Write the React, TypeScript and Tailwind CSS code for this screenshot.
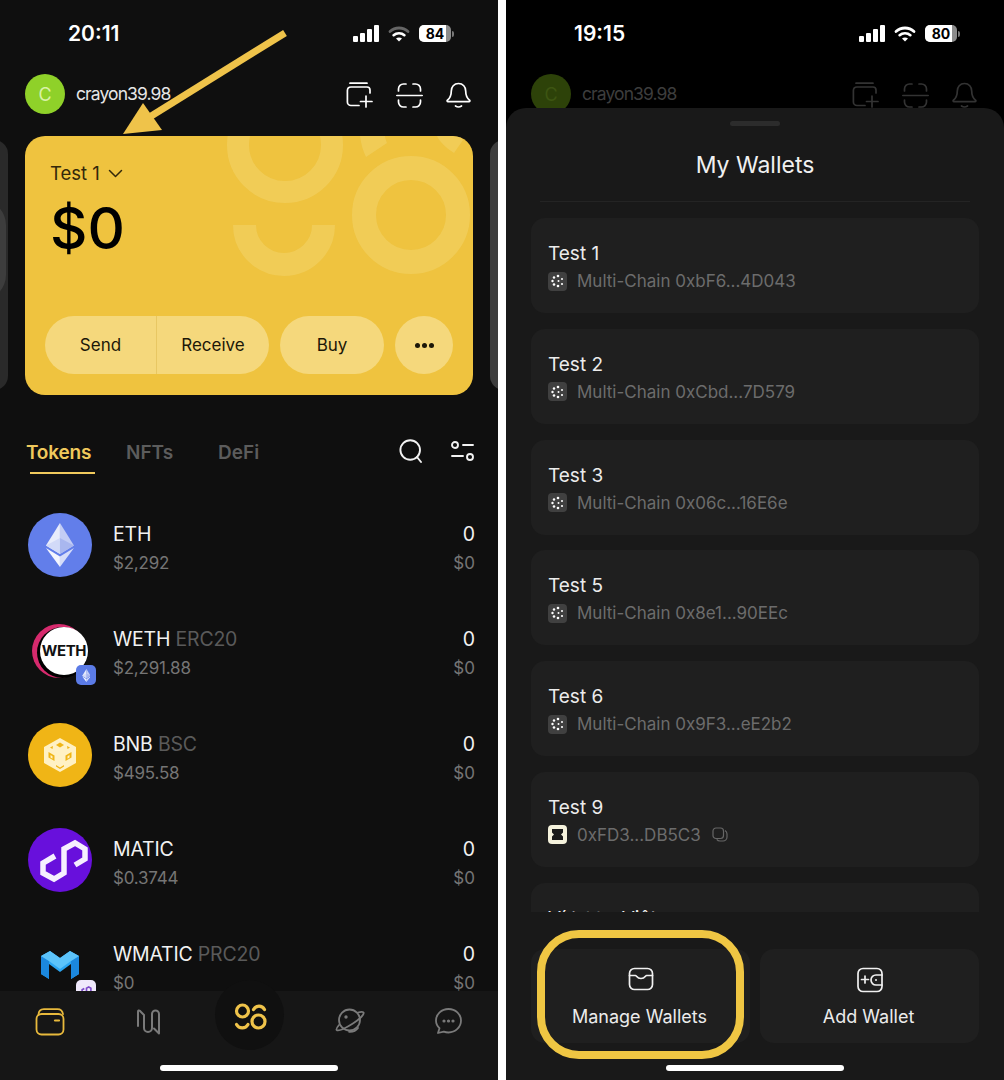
import React from "react";

const Y = "#efc34a";

function Signal() {
  return (
    <svg width="26" height="17" viewBox="0 0 26 17" fill="#fff">
      <rect x="0" y="11" width="5" height="6" rx="1" />
      <rect x="7" y="8" width="5" height="9" rx="1" />
      <rect x="14" y="4" width="5" height="13" rx="1" />
      <rect x="21" y="0" width="5" height="17" rx="1" />
    </svg>
  );
}
function Wifi({ dim }: { dim?: boolean }) {
  return (
    <svg width="22" height="16" viewBox="0 0 22 16" fill="none" strokeLinecap="round">
      <path d="M2 5.500C7 .8 15 .8 20 5.500" stroke={dim ? "#666" : "#fff"} strokeWidth="2.800" />
      <path d="M5.600 9.200c3-2.700 7.800-2.700 10.800 0" stroke="#fff" strokeWidth="2.600" />
      <path d="M11 15.600l-3-3.200c1.700-1.300 4.300-1.300 6 0z" fill="#fff" />
    </svg>
  );
}
function Battery({ value }: { value: string }) {
  return (
    <div className="flex items-center">
      <div className="w-[32px] h-[17px] rounded-[5px] bg-[#8c8c8c] overflow-hidden relative">
        <div className="absolute left-0 top-0 bottom-0 w-[27px] bg-white" />
        <div className="relative text-center text-black text-[14px] leading-[17px] font-bold">{value}</div>
      </div>
      <div className="w-[2px] h-[6px] bg-[#777] rounded-r-sm ml-[1px]" />
    </div>
  );
}
function StatusBar({ time, battery, dim }: { time: string; battery: string; dim?: boolean }) {
  return (
    <div className="h-[74px] flex items-start justify-between pt-[22px] pl-[68px] pr-[44px] shrink-0">
      <span className="text-white text-[21px] leading-[24px] font-semibold">{time}</span>
      <div className="flex items-center gap-[9px] pt-[3px]">
        <Signal />
        <Wifi dim={dim} />
        <Battery value={battery} />
      </div>
    </div>
  );
}
function HeaderIcons() {
  return (
    <div className="flex items-center gap-[23px]">
      <svg width="28" height="26" viewBox="-1 0 28 26" fill="none" stroke="currentColor" strokeWidth="1.700" strokeLinecap="round" strokeLinejoin="round">
        <path d="M4 1.200h17" />
        <path d="M13 23.500H5a3.600 3.600 0 0 1-3.600-3.600V8.500A3.600 3.600 0 0 1 5 5h16a3 3 0 0 1 3 3v3" />
        <path d="M20 14v11M14.500 19.500h11.500" />
      </svg>
      <svg width="27" height="25" viewBox="0 0 27 25" fill="none" stroke="currentColor" strokeWidth="1.700" strokeLinecap="round">
        <path d="M2.500 8V6a5 5 0 0 1 5-5h2.500M17 1h2.500a5 5 0 0 1 5 5v2M24.500 17v2a5 5 0 0 1-5 5H17M10 24H7.500a5 5 0 0 1-5-5v-2M.8 12.500h25.400" />
      </svg>
      <svg width="25" height="26" viewBox="0 0 25 26" fill="none" stroke="currentColor" strokeWidth="1.700" strokeLinecap="round" strokeLinejoin="round">
        <path d="M12.500 1.500c-4.500 0-7.200 3.400-7.200 7.500 0 5-1.500 7.200-3.800 9.200-.7.600-.3 1.500.5 1.500h21c.8 0 1.200-.9.500-1.500-2.300-2-3.800-4.200-3.800-9.200 0-4.100-2.700-7.500-7.200-7.500z" />
        <path d="M9.500 24c1.800 1.200 4.200 1.200 6 0" />
      </svg>
    </div>
  );
}
function Header({ dim }: { dim?: boolean }) {
  return (
    <div className={`h-[62px] flex items-start justify-between pl-[25px] pr-[27px] shrink-0 ${dim ? "text-[#333333]" : "text-white"}`}>
      <div className="flex items-center gap-[11px]">
        <div className={`w-[40px] h-[40px] rounded-full flex items-center justify-center text-[18px] ${dim ? "bg-[#2d4209] text-[#3d5512]" : "bg-[#8fd129] text-[#d9f2a8]"}`}>C</div>
        <span className={`text-[17.5px] tracking-[-0.9px] ${dim ? "text-[#3d3d3d]" : "text-[#e6e6e6]"}`}>crayon39.98</span>
      </div>
      <div className="pt-[8px]"><HeaderIcons /></div>
    </div>
  );
}

function CardPattern() {
  return (
    <svg className="absolute right-0 top-0" width="448" height="259" viewBox="0 0 448 259" fill="none" stroke="#f4d66e" strokeOpacity="0.5">
      <circle cx="260" cy="9" r="47" strokeWidth="22" />
      <path d="M219.500 89a39.500 39.500 0 0 0 79 0" strokeWidth="23" />
      <circle cx="386" cy="79" r="47" strokeWidth="24" />
      <path d="M335 0c1 8 3 15 6 21l21-14c-1-3-2-5-2-7z" fill="#f4d66e" fillOpacity="0.5" stroke="none" />
      <path d="M412 0c2 5 9 12 17 17l9-13-3-4z" fill="#f4d66e" fillOpacity="0.5" stroke="none" />
    </svg>
  );
}

function WalletCard() {
  return (
    <div className="relative h-[259px] mx-[25px] rounded-[20px] bg-[#efc33f] overflow-hidden flex flex-col px-[20px] pb-[21px]">
      <CardPattern />
      <div className="relative flex items-center gap-[8px] pl-[5px] pt-[25px] text-[18.5px] leading-[24px] text-[#33280a]">
        Test 1
        <svg width="15" height="9" viewBox="0 0 15 9" fill="none" stroke="#33280a" strokeWidth="1.500" strokeLinecap="round" strokeLinejoin="round"><path d="M1.500 1.500l6 6 6-6" /></svg>
      </div>
      <div className="relative pl-[5px] mt-[8px] text-[58px] leading-[70px] font-medium text-black">$0</div>
      <div className="relative mt-auto flex gap-[11px] text-[17px] text-[#1c1708]">
        <div className="w-[224px] h-[58px] rounded-full bg-[#f5d87c] flex">
          <div className="w-[112px] flex items-center justify-center pt-[2px] border-r border-[#e8c763]">Send</div>
          <div className="flex-1 flex items-center justify-center pt-[2px]">Receive</div>
        </div>
        <div className="w-[104px] h-[58px] rounded-full bg-[#f5d87c] flex items-center justify-center pt-[2px]">Buy</div>
        <div className="w-[58px] h-[58px] rounded-full bg-[#f5d87c] flex items-center justify-center gap-[2px]">
          <span className="w-[5px] h-[5px] rounded-full bg-[#1c1708]" />
          <span className="w-[5px] h-[5px] rounded-full bg-[#1c1708]" />
          <span className="w-[5px] h-[5px] rounded-full bg-[#1c1708]" />
        </div>
      </div>
    </div>
  );
}

function EthGlyph({ size }: { size: number }) {
  return (
    <svg width={size * 0.68} height={size} viewBox="0 0 28 44" fill="none">
      <path d="M14 0L0 22.500 14 31V0z" fill="#e8ecfb" />
      <path d="M14 0l14 22.500L14 31V0z" fill="#c3cdf5" />
      <path d="M14 15L0 22.500 14 31z" fill="#d2daf8" />
      <path d="M14 15l14 7.500L14 31z" fill="#a9b7ef" />
      <path d="M0 25l14 19V33.500z" fill="#f4f6fe" />
      <path d="M28 25L14 44V33.500z" fill="#d6ddf9" />
    </svg>
  );
}

function TokenIcon({ kind }: { kind: string }) {
  if (kind === "eth")
    return <div className="w-[64px] h-[64px] rounded-full bg-[#627eea] flex items-center justify-center"><EthGlyph size={44} /></div>;
  if (kind === "weth")
    return (
      <div className="relative w-[64px] h-[64px]">
        <div className="absolute left-[4px] top-[6px] w-[54px] h-[54px] rounded-full bg-[#d62a6d]" />
        <div className="absolute left-[9px] top-[9px] w-[51px] h-[51px] rounded-full bg-black" />
        <div className="absolute left-[12px] top-[9px] w-[48px] h-[48px] rounded-full bg-white flex items-center justify-center">
          <span className="text-[15px] font-bold text-[#111] tracking-[-0.4px]">WETH</span>
        </div>
        <div className="absolute left-[48px] top-[47px] w-[20px] h-[20px] rounded-[5px] bg-[#5b7be6] flex items-center justify-center"><EthGlyph size={13} /></div>
      </div>
    );
  if (kind === "bnb")
    return (
      <div className="w-[64px] h-[64px] rounded-full bg-[#f0b516] flex items-center justify-center">
        <svg width="36" height="34" viewBox="0 0 36 34">
          <path d="M18 0L34 9V25L18 34L2 25V9Z" fill="#fff1c4" />
          <g fill="#f0b516">
            <path d="M18 4.500L22 7 18 9.500 14 7z" />
            <path d="M6.500 14l6 3.500v5.500l-6-3.500z" />
            <path d="M29.500 14l-6 3.500v5.500l6-3.500z" />
            <path d="M14 27l4 2.500 4-2.500v1.500l-4 2.500-4-2.500z" />
            <path d="M8 9.500L11 8l-.5 3z" />
            <path d="M28 9.500L25 8l.5 3z" />
          </g>
          <path d="M8.500 17l2 1.200v2.500l-2-1.200zM27.500 17l-2 1.200v2.500l2-1.200z" fill="#fff1c4" />
        </svg>
      </div>
    );
  if (kind === "matic")
    return (
      <div className="w-[64px] h-[64px] rounded-full bg-[#6810dc] overflow-hidden">
        <svg width="64" height="64" viewBox="0 0 64 64" fill="none" stroke="#f6efff" strokeWidth="5.500">
          <path d="M27 28L15 35V45L26 51L36 45V21L47 15L57 21V31L47 37" />
        </svg>
      </div>
    );
  return (
    <div className="relative w-[64px] h-[64px]">
      <svg className="absolute left-[12px] top-[17px]" width="40" height="30" viewBox="0 0 40 30">
        <path d="M1 6l9-5 10 7 10-7 9 5v18l-8 5V14l-11 8-11-8v15l-8-5z" fill="#2ba6f2" />
        <path d="M1 6l8 5v18l-8-5zM31 11l8-5v18l-8 5z" fill="#1b88df" />
        <path d="M10 1l10 7 10-7 9 5-8 5-11 8-11-8-8-5z" fill="#5cc3fa" />
      </svg>
      <div className="absolute left-[48px] top-[47px] w-[20px] h-[20px] rounded-[5px] bg-[#efe8fb] flex items-center justify-center">
        <svg width="13" height="11" viewBox="0 0 46 40" fill="none" stroke="#7d4ac9" strokeWidth="6"><path d="M15 13L7 17.500v10l8 5 8-5V12l8-5 8 5v10l-8 4.500" /></svg>
      </div>
    </div>
  );
}

const tokens = [
  { k: "eth", n: "ETH", t: "", p: "$2,292" },
  { k: "weth", n: "WETH", t: "ERC20", p: "$2,291.88" },
  { k: "bnb", n: "BNB", t: "BSC", p: "$495.58" },
  { k: "matic", n: "MATIC", t: "", p: "$0.3744" },
  { k: "wmatic", n: "WMATIC", t: "PRC20", p: "$0" },
];

function TokenRow({ k, n, t, p }: { k: string; n: string; t: string; p: string }) {
  return (
    <div className="flex items-start h-[64px] shrink-0">
      <TokenIcon kind={k} />
      <div className="ml-[21px] flex-1 pt-[7px]">
        <div className="text-[19.5px] leading-[29px] text-[#f2f2f2] tracking-[-0.2px]">
          {n}{t && <span className="text-[#5a5a5a]"> {t}</span>}
        </div>
        <div className="text-[17px] leading-[29px] text-[#757575] tracking-[-0.2px]">{p}</div>
      </div>
      <div className="text-right pt-[7px]">
        <div className="text-[19.5px] leading-[29px] text-[#f2f2f2]">0</div>
        <div className="text-[17px] leading-[29px] text-[#757575]">$0</div>
      </div>
    </div>
  );
}

function Tabs() {
  return (
    <div className="h-[118px] pt-[43px] pl-[26px] pr-[24px] flex items-start justify-between shrink-0">
      <div className="flex text-[19px] leading-[30px] font-semibold text-[#5c5c5c]">
        <div className="relative w-[100px]">
          <span className="text-[#f0c95c] tracking-[-0.2px]">Tokens</span>
          <div className="absolute left-[4px] top-[34px] w-[65px] h-[2px] bg-[#f0c95c]" />
        </div>
        <div className="w-[92px]">NFTs</div>
        <div>DeFi</div>
      </div>
      <div className="flex items-center gap-[28px] pt-[1px]">
        <svg width="24" height="24" viewBox="0 0 24 24" fill="none" stroke="#f2f2f2" strokeWidth="1.900" strokeLinecap="round"><circle cx="11.200" cy="11" r="9.800" /><path d="M18 18l4 5" /></svg>
        <svg width="23" height="22" viewBox="0 0 23 22" fill="none" stroke="#f2f2f2" strokeWidth="1.900" strokeLinecap="round"><circle cx="4" cy="5" r="3" /><path d="M12 5h10M1 16h11" /><circle cx="19" cy="17" r="3" /></svg>
      </div>
    </div>
  );
}

function BottomNav() {
  const grey = "#7a7a7a";
  return (
    <div className="relative h-[89px] shrink-0 bg-[#161616] flex justify-between items-start pl-[35px] pr-[36px] pt-[17px]">
      <svg width="30" height="28" viewBox="0 0 30 28" fill="none" stroke="#e8b93c" strokeWidth="1.800" strokeLinecap="round" strokeLinejoin="round">
        <path d="M3.500 7C3.500 3.500 5.500 1.200 9 1.200h13.500c3 0 5 2 5.500 5" />
        <rect x="1.500" y="6" width="27" height="20.500" rx="5" />
        <path d="M20 12.500h4" strokeWidth="2.200" />
      </svg>
      <svg width="25" height="28" viewBox="0 0 25 28" fill="none" stroke={grey} strokeWidth="2" strokeLinecap="round" strokeLinejoin="round">
        <path d="M2 18V3.500c0-1 1-1.500 1.800-.7L8 7v13a4 4 0 0 0 8 0V6a3.500 3.500 0 0 1 7 0v19.500l-5-5" />
      </svg>
      <div className="w-[33px]" />
      <svg width="30" height="25" viewBox="0 0 30 25" fill="none" stroke={grey} strokeWidth="1.800" strokeLinecap="round">
        <circle cx="14.500" cy="12" r="10.500" />
        <path d="M23 4.500c3-.9 5.500-.8 5.700.2.400 2-4.500 6.800-11.200 11S3.500 23.500 1.700 22c-.8-.7.200-2.500 2.300-5" />
        <path d="M14 23.800c4 .3 7-1 9-3.800" />
        <circle cx="11" cy="9" r="1.700" fill={grey} stroke="none" />
      </svg>
      <svg width="27" height="26" viewBox="0 0 27 26" fill="none" stroke={grey} strokeWidth="1.800" strokeLinecap="round" strokeLinejoin="round">
        <path d="M13.500 1c7 0 12.500 5 12.500 11.500S20.500 24.500 13.500 24.500c-2 0-3.300-.3-4.700-.9L3 25l1.500-4.800C2.300 18.200 1 15.800 1 12.500 1 6 6.500 1 13.500 1z" />
        <circle cx="9" cy="13" r=".7" fill={grey} /><circle cx="13.500" cy="13" r=".7" fill={grey} /><circle cx="18" cy="13" r=".7" fill={grey} />
      </svg>
      <div className="absolute left-[215px] -top-[11px] w-[69px] h-[70px] rounded-full bg-[#101010] flex items-center justify-center">
        <svg className="mt-[3px]" width="34" height="28" viewBox="0 0 34 28" fill="none" stroke={Y} strokeWidth="3.200" strokeLinecap="round">
          <circle cx="9.500" cy="8" r="6" />
          <path d="M3.500 21.500c2.500 4.500 9 4.500 11.500 0" />
          <circle cx="25.500" cy="18.500" r="6.500" />
          <path d="M20.500 6.500c2.500-4.500 8.500-4.500 11 0" />
        </svg>
      </div>
      <div className="absolute left-1/2 -translate-x-1/2 bottom-[9px] w-[178px] h-[6px] rounded-full bg-white" />
    </div>
  );
}

function LeftScreen() {
  return (
    <div className="relative w-[498px] h-[1080px] bg-[#0f0f0f] flex flex-col overflow-hidden shrink-0">
      <StatusBar time="20:11" battery="84" dim />
      <Header />
      <div className="relative shrink-0">
        <div className="absolute -left-[20px] top-[4px] w-[28px] h-[250px] rounded-[14px] bg-[#2a2a2a] overflow-hidden">
          <div className="absolute -left-[24px] top-[60px] w-[50px] h-[100px] rounded-full bg-[#3d3d3d]" />
        </div>
        <div className="absolute -right-[20px] top-[4px] w-[28px] h-[250px] rounded-[14px] bg-[#3d3d3d]" />
        <WalletCard />
      </div>
      <Tabs />
      <div className="flex-1 overflow-hidden flex flex-col gap-[41px] pl-[28px] pr-[23px]">
        {tokens.map((t) => <TokenRow key={t.n} {...t} />)}
      </div>
      <BottomNav />
      <svg className="absolute left-0 top-0" width="498" height="150" viewBox="0 0 498 150" fill="none">
        <path d="M285 33L148 118" stroke={Y} strokeWidth="7" />
        <path d="M123 134L143 103L162 130z" fill={Y} />
      </svg>
    </div>
  );
}

const wallets = [
  { n: "Test 1", a: "Multi-Chain 0xbF6...4D043" },
  { n: "Test 2", a: "Multi-Chain 0xCbd...7D579" },
  { n: "Test 3", a: "Multi-Chain 0x06c...16E6e" },
  { n: "Test 5", a: "Multi-Chain 0x8e1...90EEc" },
  { n: "Test 6", a: "Multi-Chain 0x9F3...eE2b2" },
];

function ChainIcon() {
  return (
    <div className="w-[19px] h-[19px] rounded-[4px] bg-[#404040] flex items-center justify-center">
      <svg width="14" height="14" viewBox="0 0 14 14" fill="#fff">
        <circle cx="7" cy="2" r="1.300" /><circle cx="3" cy="3.500" r="1.200" /><circle cx="1.500" cy="7" r="1.200" />
        <circle cx="3" cy="10.500" r="1.300" /><circle cx="7" cy="12" r="1.300" /><circle cx="11" cy="10" r="1.100" />
        <circle cx="11" cy="5" r="1" /><circle cx="7.500" cy="7" r="1" />
      </svg>
    </div>
  );
}

function WalletRow({ name, children }: { name: string; children: React.ReactNode }) {
  return (
    <div className="h-[95px] shrink-0 rounded-[14px] bg-[#1f1f1f] pl-[17px] pt-[21px]">
      <div className="text-[19px] leading-[29px] text-[#ececec]">{name}</div>
      <div className="flex items-center gap-[10px] text-[17px] leading-[26px] text-[#6c6c6c]">{children}</div>
    </div>
  );
}

function RightScreen() {
  return (
    <div className="relative w-[498px] h-[1080px] bg-black flex flex-col overflow-hidden shrink-0">
      <div className="h-[108px] overflow-hidden shrink-0">
        <StatusBar time="19:15" battery="80" />
        <Header dim />
      </div>
      <div className="flex-1 rounded-t-[20px] bg-[#191919] flex flex-col relative">
        <div className="w-[50px] h-[5px] rounded-full bg-[#2c2c2c] mx-auto mt-[13px] shrink-0" />
        <div className="text-center text-[23px] leading-[32px] text-[#f0f0f0] mt-[23px] shrink-0">My Wallets</div>
        <div className="h-[1px] bg-[#242424] mx-[34px] mt-[20px] shrink-0" />
        <div className="mt-[16px] h-[694px] overflow-hidden mx-[25px] flex flex-col gap-[15.8px] shrink-0">
          {wallets.map((w) => (
            <WalletRow key={w.n} name={w.n}><ChainIcon /><span>{w.a}</span></WalletRow>
          ))}
          <WalletRow name="Test 9">
            <div className="w-[19px] h-[19px] rounded-[4px] bg-[#f5f2dc] flex items-center justify-center">
              <svg width="13" height="11" viewBox="0 0 13 11" fill="#1a1a1a"><path d="M1 0h11v3.500L10 5.500l2 2V11H1V7.500l2-2-2-2z" /></svg>
            </div>
            <span>0xFD3...DB5C3</span>
            <svg className="ml-[1px]" width="16" height="15" viewBox="0 0 16 15" fill="none" stroke="#666" strokeWidth="1.200"><rect x="1" y="1" width="10.500" height="10.500" rx="3" /><path d="M13 3.500c1.500 1 2 2 2 3.500v3a4 4 0 0 1-4 4H8c-1.500 0-2.500-.5-3.300-1.600" /></svg>
          </WalletRow>
          <WalletRow name="Ví tươm Việt"><span /></WalletRow>
        </div>
        <div className="mt-[37px] flex gap-[10px] mx-[25px] shrink-0">
          <div className="w-[219px] h-[94px] rounded-[14px] bg-[#1f1f1f] flex flex-col items-center pt-[18px] text-[18px] text-[#ececec]">
            <svg width="26" height="24" viewBox="0 0 26 24" fill="none" stroke="#f0f0f0" strokeWidth="1.700" strokeLinejoin="round" strokeLinecap="round">
              <rect x="1.500" y="1.500" width="23" height="21" rx="5" />
              <path d="M1.500 8.500h6c1 0 1.500 3 5.500 3s4.500-3 5.500-3h6" />
            </svg>
            <span className="mt-[13px] leading-[26px] -translate-x-[1px]">Manage Wallets</span>
          </div>
          <div className="flex-1 h-[94px] rounded-[14px] bg-[#1f1f1f] flex flex-col items-center pt-[18px] text-[18px] text-[#ececec]">
            <svg width="26" height="26" viewBox="0 0 26 26" fill="none" stroke="#f0f0f0" strokeWidth="1.700" strokeLinecap="round">
              <rect x="1" y="1.500" width="24" height="23" rx="5" />
              <path d="M4.500 12.500h7M8 9v7M25 8h-6a5 5 0 0 0 0 10h6" />
              <circle cx="19" cy="13" r="1" fill="#f0f0f0" stroke="none" />
            </svg>
            <span className="mt-[11px] leading-[26px] -translate-x-[1px]">Add Wallet</span>
          </div>
        </div>
        <div className="absolute left-[31px] top-[822px] w-[207px] h-[129px] rounded-[42px] border-[8px] border-[#efc643]" />
        <div className="absolute left-1/2 -translate-x-1/2 bottom-[9px] w-[178px] h-[6px] rounded-full bg-white" />
      </div>
    </div>
  );
}

export default function App() {
  return (
    <div className="w-[1004px] h-[1080px] bg-white flex justify-between overflow-hidden font-[Inter,sans-serif]">
      <LeftScreen />
      <RightScreen />
    </div>
  );
}
